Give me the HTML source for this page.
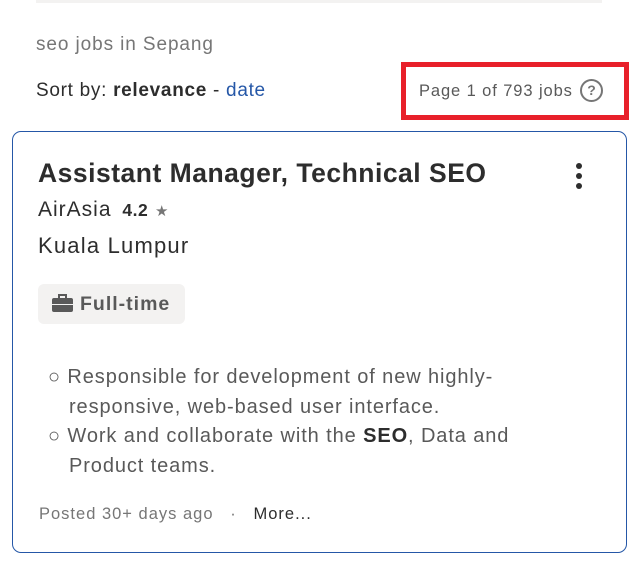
<!DOCTYPE html>
<html><head><meta charset="utf-8"><style>
*{margin:0;padding:0;box-sizing:border-box}
body{width:639px;height:564px;background:#fff;font-family:"Liberation Sans",sans-serif;position:relative;overflow:hidden;color:#2d2d2d}
.a{position:absolute;white-space:nowrap}
</style></head><body>
<div class="a" style="left:36px;top:0;width:566px;height:3px;background:#f3f2f1"></div>
<div class="a" style="left:36px;top:34px;font-size:19px;letter-spacing:0.9px;color:#767676">seo jobs in Sepang</div>
<div class="a" style="left:36px;top:80px;font-size:19px;letter-spacing:0.7px;color:#2d2d2d">Sort by: <b>relevance</b> - <span style="color:#2557a7">date</span></div>
<div class="a" style="left:401px;top:62px;width:228px;height:58px;border:5px solid #e8202a"></div>
<div class="a" style="left:419px;top:82px;font-size:16.5px;letter-spacing:0.9px;color:#595959">Page 1 of 793 jobs</div>
<div class="a" style="left:580px;top:79px;width:23px;height:23px;border:2px solid #767676;border-radius:50%;font-size:14px;font-weight:bold;color:#767676;text-align:center;line-height:19px">?</div>
<div class="a" style="left:12px;top:131px;width:615px;height:422px;border:1px solid #2557a7;border-radius:9px"></div>
<div class="a" style="left:38px;top:158px;font-size:26.5px;letter-spacing:0.5px;font-weight:bold;color:#2d2d2d">Assistant Manager, Technical SEO</div>
<div class="a" style="left:576px;top:163px;width:6px;height:6px;border-radius:50%;background:#2d2d2d;box-shadow:0 10px 0 #2d2d2d,0 20px 0 #2d2d2d"></div>
<div class="a" style="left:38px;top:198px;font-size:21px;letter-spacing:1px">AirAsia <b style="font-size:17.5px;margin-left:4px;letter-spacing:0.5px">4.2</b> <span style="color:#767676;font-size:15px">★</span></div>
<div class="a" style="left:38px;top:233px;font-size:22px;letter-spacing:1.2px">Kuala Lumpur</div>
<div class="a" style="left:38px;top:284px;width:147px;height:40px;background:#f3f2f1;border-radius:6px"></div>
<div class="a" style="left:52px;top:298px;width:21px;height:14px;background:#595959;border-radius:2px"></div>
<div class="a" style="left:58px;top:294px;width:9px;height:6px;border:2px solid #595959;border-bottom:none"></div>
<div class="a" style="left:52px;top:304px;width:21px;height:1px;background:#f3f2f1"></div>
<div class="a" style="left:80px;top:293px;font-size:19.5px;letter-spacing:1px;font-weight:bold;color:#595959">Full-time</div>
<div class="a" style="left:48px;top:363px;font-size:20px;letter-spacing:0.9px;line-height:29.5px;color:#595959">
<div>○ Responsible for development of new highly-</div>
<div style="padding-left:21px">responsive, web-based user interface.</div>
<div>○ Work and collaborate with the <b style="color:#2d2d2d">SEO</b>, Data and</div>
<div style="padding-left:21px">Product teams.</div></div>
<div class="a" style="left:39px;top:505px;font-size:16.5px;letter-spacing:1px;color:#767676">Posted 30+ days ago &nbsp; · &nbsp; <span style="color:#2d2d2d">More...</span></div>
</body></html>
